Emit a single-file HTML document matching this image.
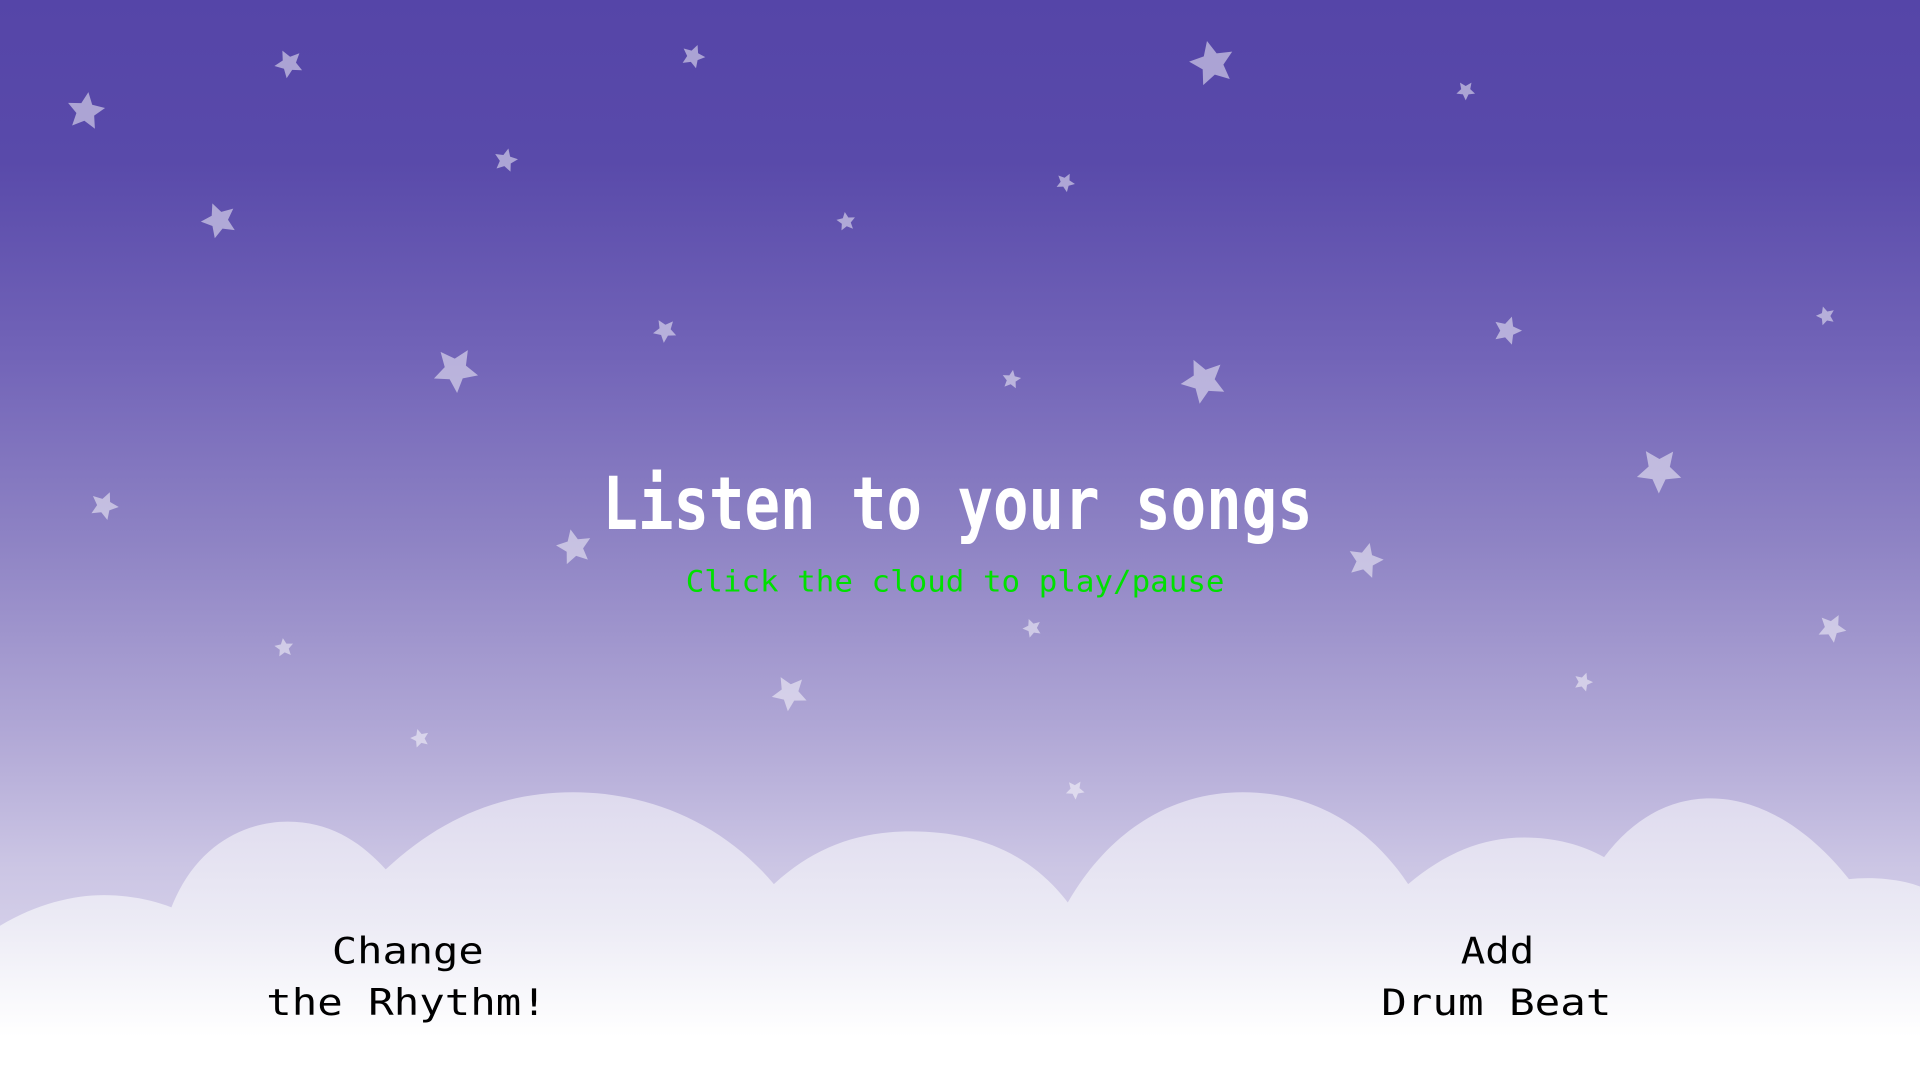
<!DOCTYPE html>
<html><head><meta charset="utf-8"><style>
html,body{margin:0;padding:0;width:1920px;height:1080px;overflow:hidden}
svg{display:block}
</style></head><body>
<svg id="s" width="1920" height="1080" viewBox="0 0 1568 882" preserveAspectRatio="none" xmlns="http://www.w3.org/2000/svg">
<defs>
<linearGradient id="bg" x1="0" y1="0" x2="0" y2="1">
<stop offset="0" stop-color="#5545a8"/>
<stop offset="0.15" stop-color="#594aaa"/>
<stop offset="0.33" stop-color="#7264b8"/>
<stop offset="0.5" stop-color="#8e83c4"/>
<stop offset="0.68" stop-color="#b1a8d6"/>
<stop offset="0.8" stop-color="#cbc5e4"/>
<stop offset="1" stop-color="#e6e3f2"/>
</linearGradient>
<linearGradient id="cl" x1="0" y1="0" x2="0" y2="1">
<stop offset="0" stop-color="#dedaee"/>
<stop offset="0.45" stop-color="#ecebf5"/>
<stop offset="0.85" stop-color="#ffffff"/>
<stop offset="1" stop-color="#ffffff"/>
</linearGradient>
</defs>
<rect width="1568" height="882" fill="url(#bg)"/>
<g id="stars" fill="#ffffff" fill-opacity="0.5"></g>
<path fill="url(#cl)" d="M0 756 C30 738 60 731 85 731 C105 731 125 735 140 741 C160 690 200 671 235 671 C270 671 295 688 315 710 C360 668 410 647 468 647 C530 647 590 672 632 722 C665 692 700 679 744 679 C795 679 840 695 872 737 C905 680 955 647 1015 647 C1075 647 1120 677 1150 722 C1180 697 1210 684 1245 684 C1270 684 1292 690 1310 700 C1335 667 1365 652 1397 652 C1440 652 1480 680 1510 718 C1525 716 1550 717 1568 724 L1568 882 L0 882 Z"/>
<text x="782" y="432" fill="#fff" font-family="'DejaVu Sans Mono','Liberation Mono',monospace" font-weight="bold" font-size="60" text-anchor="middle" textLength="580" lengthAdjust="spacingAndGlyphs">Listen to your songs</text>
<text x="780" y="483" fill="#00e000" font-family="'DejaVu Sans Mono','Liberation Mono',monospace" font-size="24" text-anchor="middle" textLength="440" lengthAdjust="spacingAndGlyphs">Click the cloud to play/pause</text>
<g fill="#000" font-family="'DejaVu Sans Mono','Liberation Mono',monospace" font-size="30" text-anchor="middle">
<text x="333" y="787" textLength="124" lengthAdjust="spacingAndGlyphs">Change</text>
<text x="332" y="829" textLength="229" lengthAdjust="spacingAndGlyphs">the Rhythm!</text>
<text x="1223" y="787" textLength="60" lengthAdjust="spacingAndGlyphs">Add</text>
<text x="1222" y="829" textLength="188" lengthAdjust="spacingAndGlyphs">Drum Beat</text>
</g>
</svg>
<script>
var S=[[70,91,16],[236,52,12],[566,46,10],[990,52,19],[1197,74,8],[413,131,10],[179,180,15],[870,149,8],[691,181,8],[543,270,10],[1231,270,12],[1491,258,8],[372,302,19],[826,310,8],[983,311,19],[85,413,12],[469,447,15],[1355,384,19],[1115,458,15],[843,513,8],[1496,513,12],[232,529,8],[645,566,15],[1293,557,8],[343,603,8],[878,645,8]];
var g=document.getElementById('stars'),h='';
S.forEach(function(s,i){var p=[],rot=(i*37%60-10)*Math.PI/180;for(var k=0;k<10;k++){var r=k%2?s[2]*0.48:s[2],a=rot+k*Math.PI/5;p.push((s[0]+r*Math.cos(a)).toFixed(1)+','+(s[1]+r*Math.sin(a)).toFixed(1));}h+='<polygon points="'+p.join(' ')+'"/>';});
g.innerHTML=h;
</script>
</body></html>
